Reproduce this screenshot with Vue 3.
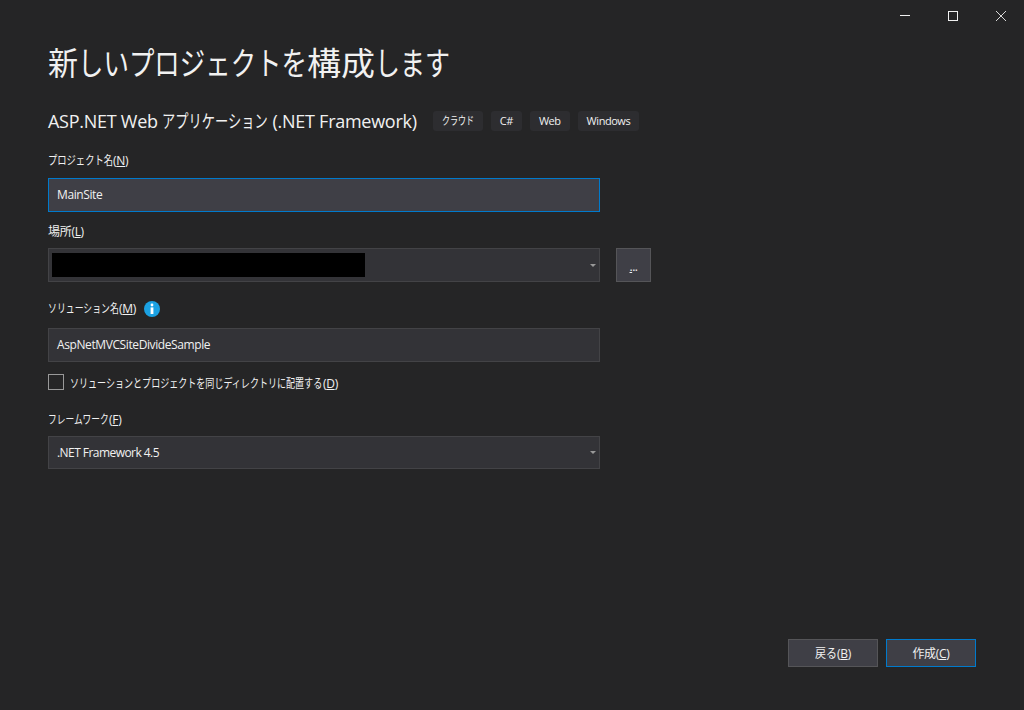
<script setup>
import { h } from 'vue'

// Narrow kana: the text keeps its real glyphs but is set to a given advance width.
const Sq = (props) =>
  h('span', { class: 'sq', style: { width: props.w + 'px' } }, [
    h(
      'span',
      { class: 'sq-in', style: { transform: `scaleX(${props.w / ([...props.t].length * props.fs)})` } },
      props.t,
    ),
  ])
Sq.props = ['t', 'w', 'fs']

const titleParts = [
  { t: '新', w: 30 },
  { t: 'しいプロジェクトを', w: 229 },
  { t: '構成', w: 68 },
  { t: 'します', w: 75 },
]
const tags = [
  { t: 'クラウド', w: 32 },
  { t: 'C#' },
  { t: 'Web' },
  { t: 'Windows' },
]
</script>

<template>
  <div class="window">
    <div class="titlebar">
      <button class="win-btn" aria-label="最小化">
        <svg width="12" height="12" viewBox="0 0 12 12"><path d="M1 5.5h10" stroke="#f1f1f1" stroke-width="1" fill="none" /></svg>
      </button>
      <button class="win-btn" aria-label="最大化">
        <svg width="12" height="12" viewBox="0 0 12 12"><rect x="1.5" y="1.5" width="9" height="9" stroke="#f1f1f1" stroke-width="1" fill="none" /></svg>
      </button>
      <button class="win-btn" aria-label="閉じる">
        <svg width="12" height="12" viewBox="0 0 12 12"><path d="M1 1l10 10M11 1L1 11" stroke="#d8d8d8" stroke-width="1" fill="none" /></svg>
      </button>
    </div>

    <main class="content">
      <h1 class="title">
        <Sq v-for="part in titleParts" :key="part.t" :t="part.t" :w="part.w" :fs="32" />
      </h1>

      <div class="subhead">
        <h2 class="template-name">ASP.NET Web <Sq t="アプリケーション" :w="106" :fs="18" /> (.NET Framework)</h2>
        <div class="tags">
          <span v-for="tag in tags" :key="tag.t" class="tag">
            <Sq v-if="tag.w" :t="tag.t" :w="tag.w" :fs="11" />
            <template v-else>{{ tag.t }}</template>
          </span>
        </div>
      </div>

      <div class="form">
        <div class="field name-field">
          <label class="label"><Sq t="プロジェクト名" :w="65" :fs="12" />(<u>N</u>)</label>
          <div class="input focused">MainSite</div>
        </div>

        <div class="field location-field">
          <label class="label">場所(<u>L</u>)</label>
          <div class="location-row">
            <div class="input combo">
              <span class="redacted"></span>
              <span class="arrow"></span>
            </div>
            <button class="browse"><span class="dots"><u>.</u>..</span></button>
          </div>
        </div>

        <div class="field solution-field">
          <label class="label label-info">
            <span><Sq t="ソリューション名" :w="71" :fs="12" />(<u>M</u>)</span>
            <svg class="info" width="16" height="16" viewBox="0 0 16 16">
              <circle cx="8" cy="8" r="8" fill="#1ba1e2" />
              <circle cx="8" cy="4" r="1.4" fill="#fff" />
              <rect x="6.6" y="6.4" width="2.8" height="6.6" fill="#fff" />
            </svg>
          </label>
          <div class="input">AspNetMVCSiteDivideSample</div>
        </div>

        <label class="check-row">
          <span class="checkbox"></span>
          <span class="check-text"><Sq t="ソリューションとプロジェクトを同じディレクトリに配置する" :w="253" :fs="12" />(<u>D</u>)</span>
        </label>

        <div class="field framework-field">
          <label class="label"><Sq t="フレームワーク" :w="61" :fs="12" />(<u>F</u>)</label>
          <div class="input combo framework-combo">
            <span>.NET Framework 4.5</span>
            <span class="arrow"></span>
          </div>
        </div>
      </div>
    </main>

    <footer class="footer">
      <button class="action"><Sq t="戻る" :w="22" :fs="12" />(<u>B</u>)</button>
      <button class="action primary">作成(<u>C</u>)</button>
    </footer>
  </div>
</template>

<style>
html, body { margin: 0; background: #252526; }
.sq { display: inline-block; white-space: nowrap; letter-spacing: 0; }
.sq-in { display: inline-block; transform-origin: left center; }
</style>

<style scoped>
.window {
  width: 1024px;
  height: 710px;
  box-sizing: border-box;
  background: #252526;
  color: #f1f1f1;
  display: flex;
  flex-direction: column;
  overflow: hidden;
  font-family: "Open Sans", "Noto Sans CJK JP", sans-serif;
  font-size: 12px;
}
.titlebar {
  display: flex;
  justify-content: flex-end;
  height: 32px;
  flex: none;
}
.win-btn {
  width: 48px;
  height: 32px;
  padding: 0 0 0 2px;
  border: 0;
  background: none;
  display: flex;
  align-items: center;
  justify-content: center;
}
.content {
  padding: 0 48px;
  flex: 1;
}
.title {
  margin: 11px 0 0;
  font-size: 32px;
  line-height: 40px;
  font-weight: 400;
  white-space: nowrap;
  color: #f1f1f1;
}
.subhead {
  display: flex;
  align-items: center;
  margin-top: 27px;
  height: 22px;
}
.template-name {
  margin: 0;
  font-size: 18px;
  font-weight: 400;
  line-height: 22px;
  letter-spacing: -0.27px;
  white-space: nowrap;
}
.tags {
  display: flex;
  gap: 8px;
  margin-left: 16px;
}
.tag {
  height: 20px;
  line-height: 20px;
  padding: 0 9px;
  background: #2d2d30;
  border-radius: 3px;
  font-size: 11px;
  letter-spacing: -0.45px;
  white-space: nowrap;
}
.form { width: 603px; }
.field { display: flex; flex-direction: column; }
.label {
  font-size: 12px;
  line-height: 18px;
  height: 18px;
  letter-spacing: -0.3px;
  color: #f1f1f1;
}
.label-info {
  display: flex;
  align-items: center;
  gap: 8px;
}
.name-field { margin-top: 20px; }
.location-field { margin-top: 11px; }
.solution-field { margin-top: 18px; }
.framework-field { margin-top: 21px; }
.name-field .label { margin-bottom: 9px; height: 16px; line-height: 16px; margin-top: 1px; }
.location-field .label { margin-bottom: 7px; }
.solution-field .label { margin-bottom: 10px; }
.framework-field .label { margin-bottom: 7px; }
.input {
  box-sizing: border-box;
  width: 552px;
  height: 34px;
  display: flex;
  align-items: center;
  justify-content: space-between;
  padding: 0 8px 1px;
  background: #333337;
  border: 1px solid #434346;
  font-size: 12px;
  color: #f1f1f1;
  letter-spacing: -0.4px;
}
.focused {
  background: #3f3f46;
  border-color: #007acc;
}
.combo {
  padding: 0 3px;
}
.framework-combo {
  height: 33px;
  padding-left: 8px;
  letter-spacing: -0.55px;
}
.redacted {
  display: block;
  width: 313px;
  height: 24px;
  background: #000;
}
.arrow {
  width: 0;
  height: 0;
  border-left: 3px solid transparent;
  border-right: 3px solid transparent;
  border-top: 3px solid #999;
  flex: none;
}
.location-row {
  display: flex;
  gap: 16px;
}
.browse {
  box-sizing: border-box;
  width: 35px;
  height: 34px;
  padding: 0;
  background: #3f3f46;
  border: 1px solid #555558;
  color: #f1f1f1;
  font-family: inherit;
  font-size: 12px;
  line-height: 1;
}
.dots {
  position: relative;
  top: 2px;
  letter-spacing: -0.5px;
}
.check-row {
  display: flex;
  align-items: center;
  gap: 6px;
  margin-top: 12px;
  height: 16px;
}
.checkbox {
  box-sizing: border-box;
  width: 16px;
  height: 16px;
  background: #252526;
  border: 1px solid #999;
}
.check-text {
  font-size: 12px;
  letter-spacing: -0.3px;
  white-space: nowrap;
  padding-top: 1px;
}
.footer {
  display: flex;
  justify-content: flex-end;
  gap: 8px;
  padding: 0 48px 43px 0;
  flex: none;
}
.action {
  box-sizing: border-box;
  width: 90px;
  height: 28px;
  padding: 0;
  background: #3f3f46;
  border: 1px solid #555558;
  color: #f1f1f1;
  font-family: inherit;
  font-size: 12px;
  letter-spacing: -0.3px;
}
.primary { border-color: #007acc; }
</style>
